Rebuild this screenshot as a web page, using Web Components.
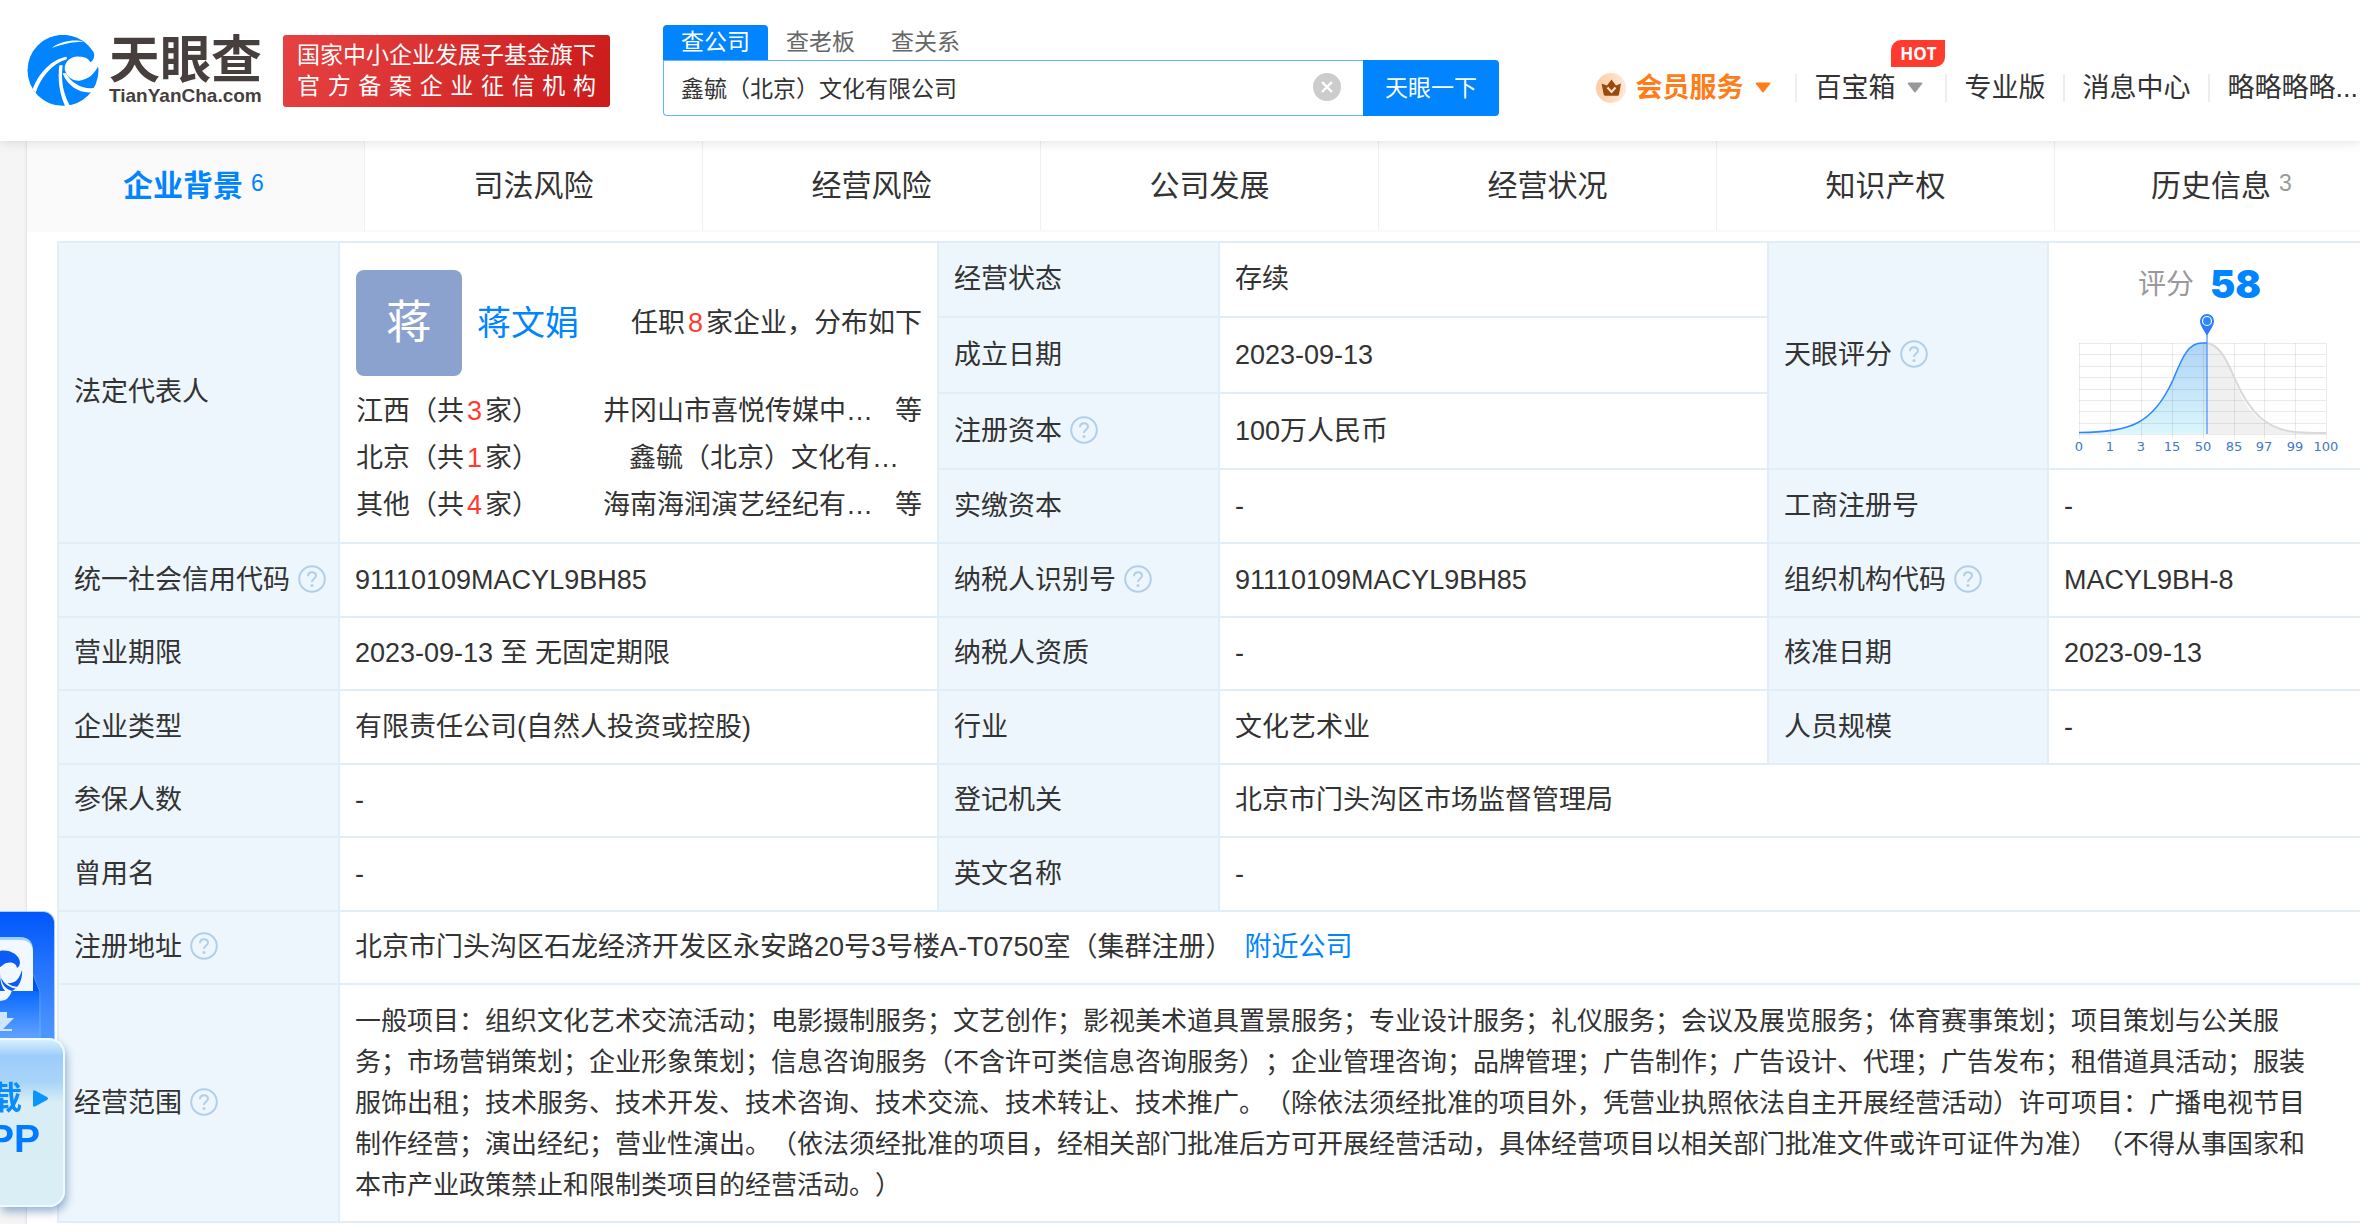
<!DOCTYPE html>
<html lang="zh-CN">
<head>
<meta charset="utf-8">
<title>鑫毓（北京）文化有限公司 - 天眼查</title>
<style>
  html, body { margin: 0; }
  body {
    font-family: "Liberation Sans", "Noto Sans CJK SC", sans-serif;
    font-size: 27px;
    color: #333;
    background: #f5f5f5;
    text-spacing-trim: space-all;
    overflow: hidden;
  }
</style>
</head>
<body>
<tyc-page></tyc-page>

<script>
const define = (name, html, setup) => {
  const template = document.createElement('template');
  template.innerHTML = html;
  customElements.define(name, class extends HTMLElement {
    constructor() {
      super();
      this.attachShadow({ mode: 'open' }).append(template.content.cloneNode(true));
    }
    connectedCallback() {
      if (setup) setup(this, this.shadowRoot);
    }
  });
};

/* Brand mark: blue disc cut by white swirls */
define('tyc-mark', `
<style>
  :host { display: block; width: 72px; height: 71px; color: #0084ff; --cut: #fff; }
  svg { display: block; width: 100%; height: 100%; }
</style>
<svg viewBox="21 21 216 213" aria-hidden="true">
  <circle cx="129" cy="127" r="106.500" fill="currentColor"/>
  <g fill="var(--cut)">
    <path d="M95 60C125 38 165 34 190 41C160 41 130 47 95 60Z"/>
    <path d="M211 103C205 90 194 86 178 86C150 84 133 103 134 124C140 148 158 159 178 158C204 155 222 141 236 112L240 84L222 66C225 84 221 98 211 103Z"/>
    <path d="M140 86C95 92 52 140 38 184L47 194C62 152 92 108 140 94Z"/>
    <path d="M118 112C112 160 120 200 136 236L149 232C130 196 122 160 128 112Z"/>
    <path d="M128 136C146 182 190 202 230 190L234 178C196 188 158 172 138 136Z"/>
  </g>
</svg>`);

define('tyc-logo', `
<style>
  :host { display: flex; align-items: center; gap: 10px; }
  .words { display: flex; flex-direction: column; color: #463f3e; white-space: nowrap; }
  .cn { font-size: 51px; line-height: 50px; font-weight: 700; }
  .en { font-size: 19px; line-height: 20px; font-weight: 700; }
</style>
<tyc-mark></tyc-mark>
<div class="words"><span class="cn">天眼查</span><span class="en">TianYanCha.com</span></div>`);

define('official-badge', `
<style>
  :host {
    display: flex; flex-direction: column; justify-content: center; box-sizing: border-box;
    width: 327px; height: 72px; padding: 0 14px; border-radius: 3px;
    background: linear-gradient(110deg, #e64242, #cb1b1b); color: #fff;
    font-size: 23px; line-height: 31px;
  }
  span { display: block; white-space: nowrap; text-align-last: justify; }
</style>
<span>国家中小企业发展子基金旗下</span>
<span>官 方 备 案 企 业 征 信 机 构</span>`);

define('search-box', `
<style>
  :host { display: block; width: 836px; font-size: 23px; }
  nav { display: flex; }
  nav a { height: 35px; line-height: 34px; padding: 0 18px; color: #666; text-decoration: none; }
  nav a.on { background: #0084ff; color: #fff; border-radius: 4px 4px 0 0; }
  form { display: flex; height: 56px; margin: 0; }
  .field {
    flex: 1; display: flex; align-items: center; box-sizing: border-box; padding: 0 22px 2px 17px;
    border: 1px solid #66b5ff; border-right: 0; border-radius: 0 0 0 4px; background: #fff;
  }
  input { flex: 1; min-width: 0; border: 0; outline: 0; padding: 0; font: inherit; color: #333; background: none; text-spacing-trim: space-all; }
  .clear { width: 28px; height: 28px; padding: 0; border: 0; background: none; }
  .clear svg { display: block; }
  .go { width: 136px; border: 0; padding: 0 0 4px; border-radius: 0 4px 4px 0; background: #0084ff; color: #fff; font: inherit; }
</style>
<nav><a class="on" href="#company">查公司</a><a href="#boss">查老板</a><a href="#relation">查关系</a></nav>
<form>
  <div class="field">
    <input type="text" aria-label="搜索公司" value="鑫毓（北京）文化有限公司">
    <button class="clear" type="button" aria-label="清空">
      <svg width="28" height="28" viewBox="0 0 28 28"><circle cx="14" cy="14" r="14" fill="#ccc"/><path d="M9 9l10 10M19 9L9 19" stroke="#fff" stroke-width="2.400"/></svg>
    </button>
  </div>
  <button class="go" type="button">天眼一下</button>
</form>`);

define('nav-item', `
<style>
  :host { display: flex; align-items: center; height: 28px; padding: 0 18px 0 17px; border-left: 2px solid #eee; position: relative; white-space: nowrap; }
  :host([vip]) { border-left-color: transparent; color: #ff7d18; font-weight: 700; --arrow: #ff7d18; padding-right: 20px; }
  a { color: inherit; text-decoration: none; line-height: 28px; }
  .crown { display: none; margin-right: 9px; }
  :host([vip]) .crown { display: block; }
  .arrow { display: none; margin: 0 4px 0 12px; fill: var(--arrow, #999); }
  :host([menu]) .arrow { display: block; }
  .hot { display: none; position: absolute; right: 0; top: -34px; height: 27px; width: 54px; text-align: center;
    background: #ff3b30; color: #fff; font: 700 17px/27px "Open Sans", sans-serif; border-radius: 10px 0 10px 0; }
  :host([hot]) .hot { display: block; }
</style>
<svg class="crown" width="30" height="30" viewBox="0 0 30 30" aria-hidden="true">
  <defs><linearGradient id="g" x1="0" x2="1"><stop offset="0" stop-color="#ffcba4"/><stop offset="1" stop-color="#ffe9da"/></linearGradient></defs>
  <circle cx="15" cy="15" r="15" fill="url(#g)"/>
  <path d="M5.500 10.500L11 12.500L15.500 6.500L20 12.500L25 10.500L23 21.500Q22.800 22.700 21.500 22.700H9.300Q8 22.700 7.700 21.500Z" fill="#994a0c"/>
  <path d="M11.500 14.500L15.500 19L19.500 14.500" fill="none" stroke="#ffe3cf" stroke-width="2"/>
</svg>
<a href="#nav"><slot></slot></a>
<svg class="arrow" width="16" height="11" viewBox="0 0 16 11" aria-hidden="true"><path d="M1.500 0.500H14.500Q16 0.500 15 2L9 9.800Q8 11 7 9.800L1 2Q0 0.500 1.500 0.500Z"/></svg>
<span class="hot">HOT</span>`, (host, root) => { if (!host.hasAttribute('hot')) root.querySelector('.hot')?.remove(); });

define('site-header', `
<style>
  :host {
    display: flex; align-items: center; box-sizing: border-box; height: 141px; padding: 0 0 0 27px;
    background: #fff; box-shadow: 0 0 12px rgba(0,0,0,.14); position: relative; z-index: 2;
  }
  tyc-logo { width: 256px; }
  search-box { margin-left: 53px; }
  nav { display: flex; margin-left: auto; padding-top: 34px; margin-right: -16px; }
</style>
<tyc-logo></tyc-logo>
<official-badge></official-badge>
<search-box></search-box>
<nav>
  <nav-item vip menu>会员服务</nav-item>
  <nav-item menu hot>百宝箱</nav-item>
  <nav-item>专业版</nav-item>
  <nav-item>消息中心</nav-item>
  <nav-item>略略略略...</nav-item>
</nav>`);

define('tab-item', `
<style>
  :host { flex: 1; display: block; border-right: 1px solid #f0f0f0; box-sizing: border-box; height: 89px; }
  :host([active]) { background: #fafafa; color: #0084ff; font-weight: 700; height: 91px; --count: #0084ff; }
  a { display: flex; align-items: center; justify-content: center; gap: 8px; height: 84px; font-size: 30px; color: inherit; text-decoration: none; }
  small { font-size: 23px; font-weight: 400; color: var(--count, #999); margin-right: 4px; }
</style>
<a href="#tab"><span><slot></slot></span></a>`, (host, root) => {
  const count = host.getAttribute('count');
  if (count && !root.querySelector('small')) {
    const small = document.createElement('small');
    small.textContent = count;
    root.querySelector('a').append(small);
  }
});

define('tab-bar', `
<style>:host { display: flex; height: 91px; background: linear-gradient(#fff 89px, #fafafa 89px); }</style>
<tab-item active count="6">企业背景</tab-item>
<tab-item>司法风险</tab-item>
<tab-item>经营风险</tab-item>
<tab-item>公司发展</tab-item>
<tab-item>经营状况</tab-item>
<tab-item>知识产权</tab-item>
<tab-item count="3">历史信息</tab-item>`);

define('help-tip', `
<style>
  :host { display: inline-block; margin-left: 8px; vertical-align: -4px; }
  svg { display: block; }
</style>
<svg width="28" height="28" viewBox="0 0 28 28" fill="none" stroke="#b1cfe9" role="img" aria-label="说明">
  <circle cx="14" cy="14" r="12.800" stroke-width="2"/>
  <path d="M10 11.200C10 8.700 11.800 7.300 14 7.300C16.300 7.300 18 8.700 18 10.800C18 13.400 14 13.800 14 17" stroke-width="2"/>
  <circle cx="14" cy="20.500" r="1.500" fill="#b1cfe9" stroke="none"/>
</svg>`);

define('region-row', `
<style>
  :host { display: flex; height: 47px; line-height: 47px; white-space: nowrap; }
  b { font-weight: 400; color: #ff3b30; margin: 0 3px; }
  .name { margin-left: auto; }
  .more { width: 49px; text-align: right; }
  :host([single]) .more { width: 23px; }
</style>
<span class="area"></span><span class="name"><slot></slot></span><span class="more"></span>`, (host, root) => {
  const count = document.createElement('b');
  count.textContent = host.getAttribute('count');
  root.querySelector('.area').replaceChildren(host.getAttribute('area') + '（共', count, '家）');
  root.querySelector('.more').textContent = host.hasAttribute('single') ? '' : '等';
});

define('legal-rep', `
<style>
  :host { display: block; }
  .head { display: flex; align-items: center; height: 106px; margin-bottom: 12px; white-space: nowrap; }
  .avatar { width: 106px; height: 106px; border-radius: 8px; background: #8ca2ce; color: #fff; font-size: 46px; line-height: 104px; text-align: center; }
  .person { margin-left: 15px; font-size: 34px; color: #0084ff; text-decoration: none; }
  .summary { margin-left: auto; }
  b { font-weight: 400; color: #ff3b30; margin: 0 3px; }
</style>
<div class="head">
  <div class="avatar">蒋</div>
  <a class="person" href="#person">蒋文娟</a>
  <span class="summary">任职<b>8</b>家企业，分布如下</span>
</div>
<region-row area="江西" count="3">井冈山市喜悦传媒中…</region-row>
<region-row area="北京" count="1" single>鑫毓（北京）文化有…</region-row>
<region-row area="其他" count="4">海南海润演艺经纪有…</region-row>`);

define('score-chart', `
<style>
  :host { display: block; }
  .score { display: flex; align-items: center; gap: 16px; height: 44px; padding-left: 75px; }
  .score span { font-size: 28px; color: #999; }
  .score strong { font: 900 38px/44px Inter, sans-serif; color: #0084ff; }
  svg { display: block; margin: 2px 0 0 7px; font: 13px "DejaVu Sans", sans-serif; }
</style>
<div class="score"><span>评分</span><strong>58</strong></div>
<svg width="280" height="146" viewBox="0 0 280 146" role="img" aria-label="评分分布">
  <defs><linearGradient id="fill" x1="0" y1="0" x2="0" y2="1"><stop offset="0" stop-color="#aed4f7"/><stop offset="1" stop-color="#dbf6fc"/></linearGradient></defs>
  <path d="M137 35C149 36 156 50 165 74C177 107 197 122 225 124C238 125 245 125 256 125V126H137Z" fill="#f0f0f0"/>
  <path d="M9 124.500C60 124.500 83 116 103 72C113 47 119 35 132 35H137V126H9Z" fill="url(#fill)"/>
  <g id="grid" fill="none" stroke="#000" stroke-opacity=".08"></g>
  <path d="M137 35C149 37 156 50 165 71C180 106 197 121 225 124C238 125 245 125 256 125" fill="none" stroke="#d9d9d9" stroke-width="2"/>
  <path d="M9 124.500C60 124.500 83 116 103 72C113 47 119 35 132 35H137" fill="none" stroke="#3088ff" stroke-width="1.600"/>
  <path d="M137 28V126" stroke="#2a78f5"/>
  <path d="M137 29C135 22 130 19 130 13A7 7 0 0 1 144 13C144 19 139 22 137 29Z" fill="#2f7cfa"/>
  <circle cx="137" cy="13" r="4.500" fill="#2f86ff" stroke="#fff" stroke-width="1.200"/>
  <g id="ticks" fill="#4478c4" text-anchor="middle"></g>
</svg>`, (host, root) => {
  const add = (parent, tag, attrs, text) => {
    const node = document.createElementNS('http://www.w3.org/2000/svg', tag);
    for (const key in attrs) node.setAttribute(key, attrs[key]);
    if (text) node.textContent = text;
    parent.append(node);
  };
  const grid = root.getElementById('grid');
  const ticks = root.getElementById('ticks');
  let lines = '';
  ['0', '1', '3', '15', '50', '85', '97', '99', '100'].forEach((label, i) => {
    const x = Math.round(9 + i * 30.9);
    lines += `M${x}.5 35V131`;
    add(ticks, 'text', { x, y: 143 }, label);
  });
  for (let i = 0; i < 9; i++) lines += `M9 ${Math.round(35 + i * 11.4)}.5H256`;
  add(grid, 'path', { d: lines });
});

define('company-table', `
<style>
  :host { display: block; }
  table { width: 100%; border-collapse: collapse; table-layout: fixed; background: #fff; line-height: 41px; }
  th, td { border: 2px solid #e1eef8; padding: 0 15px; text-align: left; font-weight: 400; height: 72px; }
  th { background: #eef6fd; white-space: nowrap; }
  tr.short > * { height: 71px; }
  tr.tall > * { height: 74px; }
  tr.first > * { height: 73px; }
  .rep { padding: 22px 15px 8px 16px; }
  .chart { padding: 0; vertical-align: top; }
  .chart score-chart { padding: 19px 0 0 14px; }
  .scope { font-size: 26px; padding: 14px 42px 14px 15px; height: 208px; }
  .near { margin-left: 12px; color: #0084ff; text-decoration: none; }
</style>
<table>
  <colgroup><col style="width:281px"><col style="width:599px"><col style="width:281px"><col style="width:549px"><col style="width:280px"><col></colgroup>
  <tr class="first"><th rowspan="4">法定代表人</th><td rowspan="4" class="rep"><legal-rep></legal-rep></td>
    <th>经营状态</th><td>存续</td>
    <th rowspan="3">天眼评分<help-tip></help-tip></th><td rowspan="3" class="chart"><score-chart></score-chart></td></tr>
  <tr class="tall"><th>成立日期</th><td>2023-09-13</td></tr>
  <tr class="tall"><th>注册资本<help-tip></help-tip></th><td>100万人民币</td></tr>
  <tr><th>实缴资本</th><td>-</td><th>工商注册号</th><td>-</td></tr>
  <tr><th>统一社会信用代码<help-tip></help-tip></th><td>91110109MACYL9BH85</td><th>纳税人识别号<help-tip></help-tip></th><td>91110109MACYL9BH85</td><th>组织机构代码<help-tip></help-tip></th><td>MACYL9BH-8</td></tr>
  <tr class="short"><th>营业期限</th><td>2023-09-13 至 无固定期限</td><th>纳税人资质</th><td>-</td><th>核准日期</th><td>2023-09-13</td></tr>
  <tr><th>企业类型</th><td>有限责任公司(自然人投资或控股)</td><th>行业</th><td>文化艺术业</td><th>人员规模</th><td>-</td></tr>
  <tr class="short"><th>参保人数</th><td>-</td><th>登记机关</th><td colspan="3">北京市门头沟区市场监督管理局</td></tr>
  <tr><th>曾用名</th><td>-</td><th>英文名称</th><td colspan="3">-</td></tr>
  <tr class="short"><th>注册地址<help-tip></help-tip></th><td colspan="5">北京市门头沟区石龙经济开发区永安路20号3号楼A-T0750室（集群注册）<a class="near" href="#near">附近公司</a></td></tr>
  <tr><th>经营范围<help-tip></help-tip></th><td colspan="5" class="scope">一般项目：组织文化艺术交流活动；电影摄制服务；文艺创作；影视美术道具置景服务；专业设计服务；礼仪服务；会议及展览服务；体育赛事策划；项目策划与公关服务；市场营销策划；企业形象策划；信息咨询服务（不含许可类信息咨询服务）；企业管理咨询；品牌管理；广告制作；广告设计、代理；广告发布；租借道具活动；服装服饰出租；技术服务、技术开发、技术咨询、技术交流、技术转让、技术推广。（除依法须经批准的项目外，凭营业执照依法自主开展经营活动）许可项目：广播电视节目制作经营；演出经纪；营业性演出。（依法须经批准的项目，经相关部门批准后方可开展经营活动，具体经营项目以相关部门批准文件或许可证件为准）（不得从事国家和本市产业政策禁止和限制类项目的经营活动。）</td></tr>
</table>`);

/* Promo pinned to the left edge of the window, partly off screen */
define('app-download', `
<style>
  :host { display: block; position: fixed; left: 0; top: 911px; z-index: 3; width: 66px; height: 296px; }
  .box { width: 55px; height: 150px; box-sizing: border-box; border: 1px solid #a9cdff; border-left: 0; border-radius: 0 12px 0 0; background: linear-gradient(#0057fb, #5ea3ff); overflow: hidden; }
  .box svg { display: block; }
  .glass {
    position: absolute; left: 0; top: 127px; box-sizing: border-box; width: 65px; height: 169px; padding: 38px 0 0;
    border: 2px solid #eefaff; border-left: 0; border-radius: 0 16px 16px 0; overflow: hidden;
    background: linear-gradient(#d7f0fe 0, #9cccfa 16px, #a8d4f8 42px, #d8edf5 62px, #daeef5);
    color: #0a8cff; font-weight: 700;
  }
  .shade { position: absolute; left: 0; top: 127px; width: 65px; height: 169px; border-radius: 0 16px 16px 0; box-shadow: 2px 5px 9px rgba(60,110,170,.5); }
  .line { display: flex; justify-content: flex-end; align-items: center; gap: 11px; width: 48px; height: 40px; line-height: 40px; font-size: 32px; }
  .line svg { flex: none; }
  .app { width: 40px; height: 42px; line-height: 42px; display: flex; justify-content: flex-end; font-size: 39px; color: #007bff; }
</style>
<div class="shade"></div>
<div class="box">
  <svg width="54" height="148" viewBox="0 0 54 148" aria-hidden="true">
    <defs><linearGradient id="p" x1="0" y1="0" x2="0" y2="1"><stop offset="0" stop-color="#0868ff"/><stop offset="1" stop-color="#8cc0ff"/></linearGradient></defs>
    <path d="M33 62L40 80H30Z" fill="#0052f5" stroke="#4c93ff"/>
    <path d="M0 25H20Q33 25 33 39V78H0Z" fill="#9dd2ff"/>
    <path d="M0 28H20Q33 28 33 41V79H12Q9 89 0 89Z" fill="#f1f8ff"/>
    <path d="M12 79H41V148H0V89Q9 89 12 79Z" fill="url(#p)"/>
    <path d="M40 79V148" stroke="#6aaaff"/>
    <g fill="#0a5cf5">
      <path d="M0 39C8 37 20 42 20 51Q20 54 17 56C16 50 8 49 3 53Q0 55 -3 58V42Z"/>
      <path d="M22 58C23 66 19 76 12 79C5 77 2 72 1 66C5 72 10 72 14 70Q19 68 22 58Z"/>
      <path d="M0 61Q0 73 5 79H-2V61Z"/>
    </g>
    <path d="M2 65Q6 75 18 76" fill="none" stroke="#f1f8ff" stroke-width="2"/>
    <path d="M0 100H7V106H14L3 117H12V119H0V117L0 100Z" fill="#cfe6ff"/>
  </svg>
</div>
<div class="glass">
  <div class="line"><span>载</span><svg width="15" height="17" viewBox="0 0 15 17" aria-hidden="true"><path d="M0 2Q0-1 3 1L14 7Q16 8.500 14 10L3 16Q0 18 0 15Z" fill="#0a96ff"/></svg></div>
  <div class="app">PP</div>
</div>`);

define('tyc-page', `
<style>
  :host { display: block; overflow: hidden; min-height: 100vh; }
  main { margin: 0 -33px 0 27px; background: #fff; box-shadow: 0 0 3px rgba(0,0,0,.15); }
  company-table { padding: 9px 29px 20px 30px; }
</style>
<site-header></site-header>
<main>
  <tab-bar></tab-bar>
  <company-table></company-table>
</main>
<app-download></app-download>`);
</script>
</body>
</html>
